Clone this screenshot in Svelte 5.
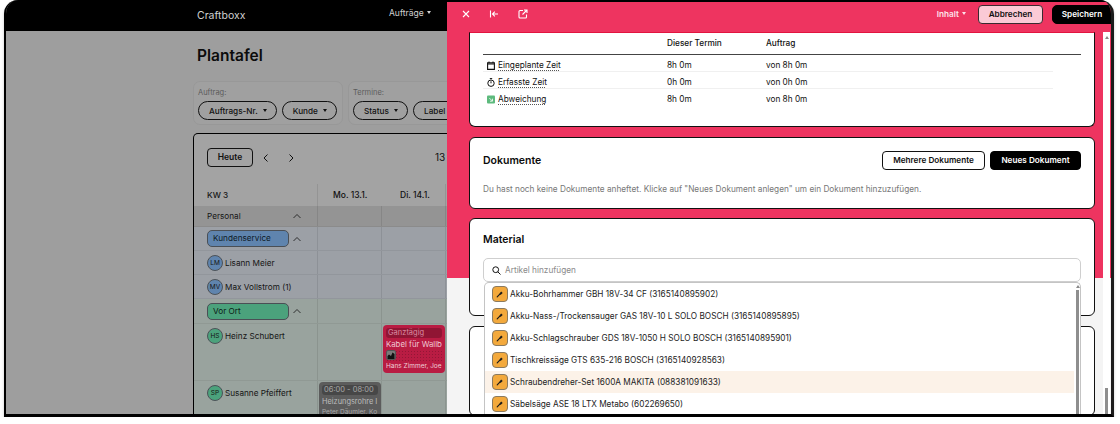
<script>
  const rows = [
    { time: 'Eingeplante Zeit', a: '8h 0m', b: 'von 8h 0m', icon: 'cal' },
    { time: 'Erfasste Zeit', a: '0h 0m', b: 'von 0h 0m', icon: 'watch' },
    { time: 'Abweichung', a: '8h 0m', b: 'von 8h 0m', icon: 'diff' }
  ];
  const items = [
    'Akku-Bohrhammer GBH 18V-34 CF (3165140895902)',
    'Akku-Nass-/Trockensauger GAS 18V-10 L SOLO BOSCH (3165140895895)',
    'Akku-Schlagschrauber GDS 18V-1050 H SOLO BOSCH (3165140895901)',
    'Tischkreissäge GTS 635-216 BOSCH (3165140928563)',
    'Schraubendreher-Set 1600A MAKITA (088381091633)',
    'Säbelsäge ASE 18 LTX Metabo (602269650)'
  ];
</script>

<div class="window">
  <div class="page">
    <header class="nav">
      <span class="brand">Craftboxx</span>
      <span class="navlink">Aufträge <i class="caret"></i></span>
    </header>
    <main class="main">
      <h1>Plantafel</h1>
      <div class="filters">
        <div class="fgroup g1">
          <div class="flabel">Auftrag:</div>
          <div class="pills">
            <span class="pill">Auftrags-Nr. <i class="caret dark"></i></span>
            <span class="pill">Kunde <i class="caret dark"></i></span>
          </div>
        </div>
        <div class="fgroup g2">
          <div class="flabel">Termine:</div>
          <div class="pills">
            <span class="pill">Status <i class="caret dark"></i></span>
            <span class="pill">Label <i class="caret dark"></i></span>
          </div>
        </div>
      </div>
      <section class="cal">
        <div class="toolbar">
          <span class="today">Heute</span>
          <svg class="chev" width="8" height="10" viewBox="0 0 8 10"><path d="M5.5 1.5 2 5l3.5 3.5" /></svg>
          <svg class="chev next" width="8" height="10" viewBox="0 0 8 10"><path d="M2.5 1.5 6 5 2.5 8.5" /></svg>
          <span class="range">13</span>
        </div>
        <div class="row head">
          <div class="lbl"><span class="indent">KW 3</span></div>
          <div class="cell day">Mo. 13.1.</div>
          <div class="cell day">Di. 14.1.</div>
          <div class="cell"></div>
        </div>
        <div class="row personal">
          <div class="lbl"><span class="indent grow">Personal</span><svg class="up" width="10" height="6" viewBox="0 0 10 6"><path d="M1.5 5 5 1.5 8.5 5" /></svg></div>
          <div class="cell"></div><div class="cell"></div><div class="cell"></div>
        </div>
        <div class="row blue team">
          <div class="lbl"><span class="tag tblue">Kundenservice</span><svg class="up" width="10" height="6" viewBox="0 0 10 6"><path d="M1.5 5 5 1.5 8.5 5" /></svg></div>
          <div class="cell"></div><div class="cell"></div><div class="cell"></div>
        </div>
        <div class="row blue person">
          <div class="lbl"><span class="av ablue">LM</span><span class="pname">Lisann Meier</span></div>
          <div class="cell"></div><div class="cell"></div><div class="cell"></div>
        </div>
        <div class="row blue person">
          <div class="lbl"><span class="av ablue">MV</span><span class="pname">Max Vollstrom (1)</span></div>
          <div class="cell"></div><div class="cell"></div><div class="cell"></div>
        </div>
        <div class="row green team t2">
          <div class="lbl"><span class="tag tgreen">Vor Ort</span><svg class="up" width="10" height="6" viewBox="0 0 10 6"><path d="M1.5 5 5 1.5 8.5 5" /></svg></div>
          <div class="cell"></div><div class="cell"></div><div class="cell"></div>
        </div>
        <div class="row green person tall">
          <div class="lbl"><span class="av agreen">HS</span>Heinz Schubert</div>
          <div class="cell"></div>
          <div class="cell">
            <div class="event red">
              <div class="etime">Ganztägig</div>
              <div class="etitle">Kabel für Wallbox</div>
              <div class="eicons"><span class="eicon"><svg width="8" height="8" viewBox="0 0 8 8"><path d="M.5 8V5l1.500-1.500L4 5l1.500-3.500L7.500 3v5z" fill="#111" /></svg></span></div>
              <div class="enames">Hans Zimmer, Joe</div>
            </div>
          </div>
          <div class="cell"></div>
        </div>
        <div class="row green person last">
          <div class="lbl"><span class="av agreen">SP</span>Susanne Pfeiffert</div>
          <div class="cell">
            <div class="event gray">
              <div class="etime">06:00 - 08:00</div>
              <div class="etitle">Heizungsrohre I</div>
              <div class="enames">Peter Däumler, Ko</div>
            </div>
          </div>
          <div class="cell"></div>
          <div class="cell"></div>
        </div>
      </section>
    </main>
  </div>

  <aside class="drawer">
    <div class="dhead">
      <svg class="hicon first" width="10" height="10" viewBox="0 0 10 10"><path d="M2 2l6 6M8 2 2 8" /></svg>
      <svg class="hicon" width="10" height="10" viewBox="0 0 10 10"><path d="M1.5 1.5v7M9 5H3.5M5.8 2.7 3.5 5l2.3 2.3" /></svg>
      <svg class="hicon ext" width="10" height="10" viewBox="0 0 10 10"><path d="M5 1.5H2a1 1 0 0 0-1 1v5.500a1 1 0 0 0 1 1h5.500a1 1 0 0 0 1-1V5.500M4.500 5.500 9 1M6 1h3v3" /></svg>
      <span class="hspace"></span>
      <span class="inhalt">Inhalt <i class="caret"></i></span>
      <span class="btn cancel">Abbrechen</span>
      <span class="btn save">Speichern</span>
    </div>
    <div class="dbody">
      <div class="dcol">
        <section class="card c1">
          <div class="thead"><span></span><span>Dieser Termin</span><span>Auftrag</span></div>
          {#each rows as r}
            <div class="trow">
              <span class="tlabel">
                {#if r.icon === 'cal'}
                  <svg width="8" height="9" viewBox="0 0 8 9"><path d="M.6 1.800h6.800v6.600H.6zM.6 3h6.800" fill="none" stroke="#111" stroke-width="1.100" /><path d="M2 .5v1.500M6 .5v1.500" stroke="#111" /></svg>
                {:else if r.icon === 'watch'}
                  <svg width="8" height="9" viewBox="0 0 8 9"><circle cx="4" cy="5.200" r="3.200" fill="none" stroke="#111" stroke-width="1" /><path d="M2.800.6h2.400M4 3.300v2" stroke="#111" /></svg>
                {:else}
                  <svg width="8" height="9" viewBox="0 0 8 9"><rect y=".5" width="8" height="8" rx="1" fill="#5dba7d" /><path d="M2.300 3 5.300 6M5.500 3.700V6.200H3" fill="none" stroke="#fff" stroke-width=".8" /></svg>
                {/if}
                <span class="dotted">{r.time}</span>
              </span>
              <span>{r.a}</span>
              <span>{r.b}</span>
            </div>
          {/each}
        </section>

        <section class="card c2">
          <div class="chead">
            <h2>Dokumente</h2>
            <span class="btn outline">Mehrere Dokumente</span>
            <span class="btn solid">Neues Dokument</span>
          </div>
          <p>Du hast noch keine Dokumente anheftet. Klicke auf "Neues Dokument anlegen" um ein Dokument hinzuzufügen.</p>
        </section>

        <section class="card c3">
          <h2>Material</h2>
          <div class="search">
            <svg width="9" height="9" viewBox="0 0 9 9"><circle cx="3.700" cy="3.700" r="2.900" fill="none" stroke="#111" stroke-width="1" /><path d="M5.800 5.800 8.500 8.500" stroke="#111" stroke-width="1" /></svg>
            <span>Artikel hinzufügen</span>
          </div>
          <div class="menu">
            <div class="list">
              {#each items as item, i}
                <div class="item" class:hl={i === 4}>
                  <span class="tool">
                    <svg width="8" height="8" viewBox="0 0 8 8"><path d="M1.200 6.800 3.600 4.400" stroke="#1a1a1a" stroke-width="1.200" stroke-linecap="round" /><path d="M3.300 3.700 5.200 1.500 6.700 3 4.500 4.900z" fill="#1a1a1a" /></svg>
                  </span>
                  <span class="itext">{item}</span>
                </div>
              {/each}
            </div>
            <div class="mscroll"><i class="arrow"></i><i class="mthumb"></i></div>
          </div>
        </section>

        <section class="card c4"></section>
      </div>
      <div class="dscroll"><i class="arrow"></i><i class="dthumb"></i></div>
    </div>
  </aside>
</div>

<style>
  :global(body) {
    margin: 0;
    background: #fff;
    font-family: Inter, "Liberation Sans", sans-serif;
    overflow: hidden;
  }
  .window {
    position: relative;
    margin-left: 4px;
    width: 1105px;
    height: 414px;
    border-left: 2px solid #000;
    border-right: 3px solid #1b1b1b;
    border-bottom: 3px solid #000;
    border-radius: 14px 14px 0 0;
    overflow: hidden;
    box-shadow: 0 2px 3px rgba(0, 0, 0, .22);
    background: #9e9e9e;
  }
  i { display: inline-block; }
  .caret {
    width: 0;
    height: 0;
    border-left: 2.500px solid transparent;
    border-right: 2.500px solid transparent;
    border-top: 3px solid currentColor;
    margin-left: 1px;
    vertical-align: 2px;
  }
  .caret.dark { color: #111; margin-left: 3px; }

  .page { width: 1105px; height: 414px; overflow: hidden; }
  .nav {
    height: 31px;
    background: #000;
    display: flex;
    align-items: center;
    padding-left: 191px;
    color: #d0d0d0;
  }
  .brand { font-size: 10.500px; width: 192px; }
  .navlink { font-size: 8.500px; margin-top: -5px; }
  .main { padding: 15px 0 0 187px; width: 900px; }
  h1 {
    margin: 0 0 15px 4px;
    font-size: 15.500px;
    line-height: 20px;
    font-weight: 600;
    color: #0c0c0c;
  }
  .filters { display: flex; gap: 5px; }
  .fgroup {
    height: 44px;
    box-sizing: border-box;
    border: 1px solid #989898;
    border-radius: 7px;
    background: #a0a0a0;
    padding: 6px 4px 0;
  }
  .g1 { width: 150px; }
  .g2 { width: 150px; }
  .flabel { font-size: 7.500px; line-height: 10px; color: #5c5c5c; margin-bottom: 3px; }
  .pills { display: flex; gap: 5px; }
  .pill {
    height: 19px;
    box-sizing: border-box;
    border: 1px solid #111;
    border-radius: 10px;
    padding: 0 9px 0 10px;
    display: flex;
    align-items: center;
    white-space: pre;
    font-size: 8.200px;
    font-weight: 500;
    color: #111;
  }
  .cal {
    margin-top: 8px;
    height: 282px;
    width: 700px;
    box-sizing: border-box;
    border: 1px solid #000;
    border-bottom: 0;
    border-radius: 5px 5px 0 0;
    background: #a3a3a3;
    overflow: hidden;
  }
  .toolbar {
    height: 50px;
    box-sizing: border-box;
    padding: 14px 0 0 13px;
    display: flex;
    align-items: flex-start;
  }
  .today {
    width: 46px;
    height: 19px;
    box-sizing: border-box;
    border: 1px solid #111;
    border-radius: 4px;
    text-align: center;
    font-size: 8.500px;
    line-height: 17px;
    font-weight: 600;
    color: #111;
  }
  .chev { margin: 5px 0 0 9px; fill: none; stroke: #111; stroke-width: 1; }
  .chev.next { margin-left: 17px; }
  .range { margin-left: 140px; font-size: 10px; line-height: 19px; color: #111; }

  .row { display: flex; box-sizing: border-box; border-bottom: 1px solid rgba(0, 0, 0, .06); }
  .lbl {
    width: 123px;
    box-sizing: border-box;
    padding-left: 13px;
    display: flex;
    align-items: center;
    font-size: 8.200px;
    color: #151515;
  }
  .cell {
    width: 64px;
    box-sizing: border-box;
    border-left: 1px solid rgba(0, 0, 0, .09);
    flex: none;
  }
  .head { height: 22px; border-bottom: 0; }
  .head .lbl { font-weight: 500; }
  .day { font-size: 8.500px; font-weight: 500; line-height: 22px; padding-left: 15px; color: #111; }
  .head .cell:nth-child(3) { border-left-color: transparent; padding-left: 18px; }
  .personal { height: 21px; background: #949494; }
  .indent.grow { flex: 1; }
  .up { fill: none; stroke: #222; stroke-width: .9; margin-right: 15px; flex: none; }
  .blue { background: #9ca0a6; }
  .green { background: #99a39e; }
  .team { height: 24px; }
  .t2 { height: 25px; }
  .tag {
    width: 82px;
    height: 17px;
    box-sizing: border-box;
    border: 1px solid #4a4f55;
    border-radius: 5px;
    padding-left: 5px;
    line-height: 15px;
    flex: none;
    color: #0d1a26;
  }
  .tblue { background: #5f84ae; }
  .tgreen { background: #4ba27c; color: #0d2016; }
  .team .up { margin-right: 0; margin-left: 3px; }
  .person { height: 24px; }
  .pname { padding-top: 1px; }
  .av {
    width: 16px;
    height: 16px;
    box-sizing: border-box;
    border-radius: 50%;
    border: 1px solid #4c5258;
    font-size: 6.500px;
    line-height: 14px;
    text-align: center;
    margin-right: 2px;
    flex: none;
  }
  .ablue { background: #5f84ae; }
  .agreen { background: #4ba27c; }
  .tall { height: 57px; }
  .tall .lbl, .last .lbl { align-items: flex-start; padding-top: 4px; line-height: 16px; }
  .last { height: 40px; border-bottom: 0; }
  .event {
    margin: 1px 0 0 1px;
    border-radius: 4px;
    padding: 3px 3px 2px;
    overflow: hidden;
    white-space: nowrap;
    font-size: 7.500px;
    color: #d98aa0;
  }
  .red {
    height: 48px;
    box-sizing: border-box;
    background: #b91c43;
  }
  .gray { height: 42px; box-sizing: border-box; background: #5c5c5c; color: #a8a8a8; }
  .etime {
    background: rgba(0, 0, 0, .22);
    border-radius: 3px;
    padding-left: 2px;
    line-height: 10px;
    height: 10px;
    margin-bottom: 1px;
  }
  .etitle { font-size: 7.800px; line-height: 11px; overflow: hidden; color: #efc7d2; }
  .gray .etitle { font-size: 7.400px; color: #bdbdbd; }
  .eicons {
    height: 11px;
    background-image: radial-gradient(rgba(0, 0, 0, .2) .6px, transparent .7px);
    background-size: 3px 3px;
  }
  .eicon {
    display: flex;
    align-items: center;
    justify-content: center;
    width: 10px;
    height: 10px;
    box-sizing: border-box;
    background: #7a7a7a;
    border: 1px solid #555;
    border-radius: 2px;
  }
  .enames { font-size: 6.500px; line-height: 10px; overflow: hidden; color: #eecfd7; }
  .gray .enames { color: #aaa; }

  .drawer {
    position: absolute;
    top: 0;
    right: 0;
    bottom: 0;
    left: 441px;
    box-sizing: border-box;
    display: flex;
    flex-direction: column;
    border-top: 2px solid #000;
    background: linear-gradient(#ee3460 276px, #f4f4f4 276px);
  }
  .dhead {
    height: 30px;
    flex: none;
    display: flex;
    align-items: center;
    padding-bottom: 6px;
    box-sizing: border-box;
    color: #fff;
  }
  .hicon { fill: none; stroke: #fff; stroke-width: 1.100; margin-right: 18px; flex: none; }
  .hicon.first { margin-left: 14px; }
  .hicon.ext { margin-left: 1px; }
  .hspace { flex: 1; }
  .inhalt { font-size: 8.200px; font-weight: 600; color: #fde2e9; margin-right: 12px; }
  .btn {
    height: 19px;
    box-sizing: border-box;
    border-radius: 4px;
    font-size: 8.200px;
    line-height: 17px;
    font-weight: 600;
    text-align: center;
    flex: none;
  }
  .cancel {
    width: 65px;
    background: #fbcad6;
    border: 1px solid #3a2a30;
    color: #111;
    margin-right: 9px;
  }
  .save {
    width: 60px;
    margin-right: -1px;
    background: #000;
    border: 1px solid #000;
    color: #fff;
    border-radius: 5px 0 0 5px;
  }
  .dbody { display: flex; flex: 1; min-height: 0; }
  .dcol {
    width: 626px;
    margin-left: 22px;
    display: flex;
    flex-direction: column;
    gap: 10px;
    flex: none;
  }
  .card {
    box-sizing: border-box;
    border: 1px solid #111;
    border-radius: 6px;
    background: #fff;
    padding: 0 13px;
    position: relative;
    flex: none;
    color: #111;
  }
  .c1 { height: 95px; border-top-color: #e2143f; border-radius: 0 0 6px 6px; }
  .c2 { height: 72px; }
  .c3 { height: 98px; margin-top: -1px; }
  .c4 { height: 90px; }
  .thead, .trow {
    display: grid;
    grid-template-columns: 184px 99px 1fr;
    font-size: 8.250px;
  }
  .thead {
    height: 22px;
    width: 598px;
    box-sizing: border-box;
    align-items: center;
    padding-bottom: 2px;
    border-bottom: 1px solid #444;
    font-weight: 500;
  }
  .trow {
    height: 17px;
    width: 570px;
    box-sizing: border-box;
    padding-top: 4px;
    line-height: 12px;
    border-bottom: 1px solid #f0f0f0;
  }
  .trow:last-child { border-bottom-color: transparent; }
  .tlabel { display: flex; align-items: center; gap: 3px; padding-left: 4px; }
  .tlabel svg { flex: none; }
  .dotted {
    text-decoration: underline dotted #555;
    text-underline-offset: 1.500px;
    line-height: 11px;
  }
  h2 { margin: 0; font-size: 10.500px; line-height: 14px; font-weight: 600; color: #0c0c0c; }
  .chead { display: flex; align-items: center; height: 19px; margin-top: 13px; gap: 5px; }
  .chead h2 { flex: 1; padding-top: 1px; }
  .outline { width: 103px; border: 1px solid #111; background: #fff; color: #111; }
  .solid { width: 91px; border: 1px solid #000; background: #000; color: #fff; }
  p { margin: 13px 0 0; font-size: 8.260px; line-height: 12px; color: #777; }
  .c3 h2 { margin-top: 14px; }
  .search {
    margin-top: 11px;
    height: 24px;
    box-sizing: border-box;
    border: 1px solid #cfcfcf;
    border-radius: 5px;
    display: flex;
    align-items: center;
    gap: 4px;
    padding-left: 8px;
    font-size: 8.250px;
    color: #8a8a8a;
  }
  .menu {
    position: absolute;
    left: 14px;
    top: 63px;
    width: 597px;
    height: 140px;
    box-sizing: border-box;
    background: #fff;
    border: 1px solid #c4c4c4;
    border-bottom: 0;
    border-radius: 5px 5px 0 0;
    display: flex;
    z-index: 2;
  }
  .list { width: 589px; flex: none; }
  .item {
    height: 22px;
    display: flex;
    align-items: center;
    gap: 2px;
    padding-left: 7px;
    font-size: 8.250px;
    color: #222;
    white-space: nowrap;
  }
  .hl { background: #fcf2e8; }
  .tool {
    width: 16px;
    height: 16px;
    box-sizing: border-box;
    background: #f3a93c;
    border: 1px solid #8a7a60;
    border-radius: 4px;
    display: flex;
    align-items: center;
    justify-content: center;
    flex: none;
  }
  .mscroll { width: 5px; margin-left: 1px; display: flex; flex-direction: column; align-items: center; }
  .mthumb { width: 3px; flex: 1; background: #8e8e8e; margin-top: 2px; }
  .arrow {
    width: 0;
    height: 0;
    border-left: 2px solid transparent;
    border-right: 2px solid transparent;
    border-bottom: 3px solid #888;
    margin-top: 2px;
    flex: none;
  }
  .dscroll {
    width: 7px;
    margin-left: 8px;
    background: #fff;
    display: flex;
    flex-direction: column;
    align-items: center;
    padding-top: 2px;
    box-sizing: border-box;
    flex: none;
  }
  .dthumb { width: 3px; height: 26px; margin-top: auto; background: #8e8e8e; }
</style>
